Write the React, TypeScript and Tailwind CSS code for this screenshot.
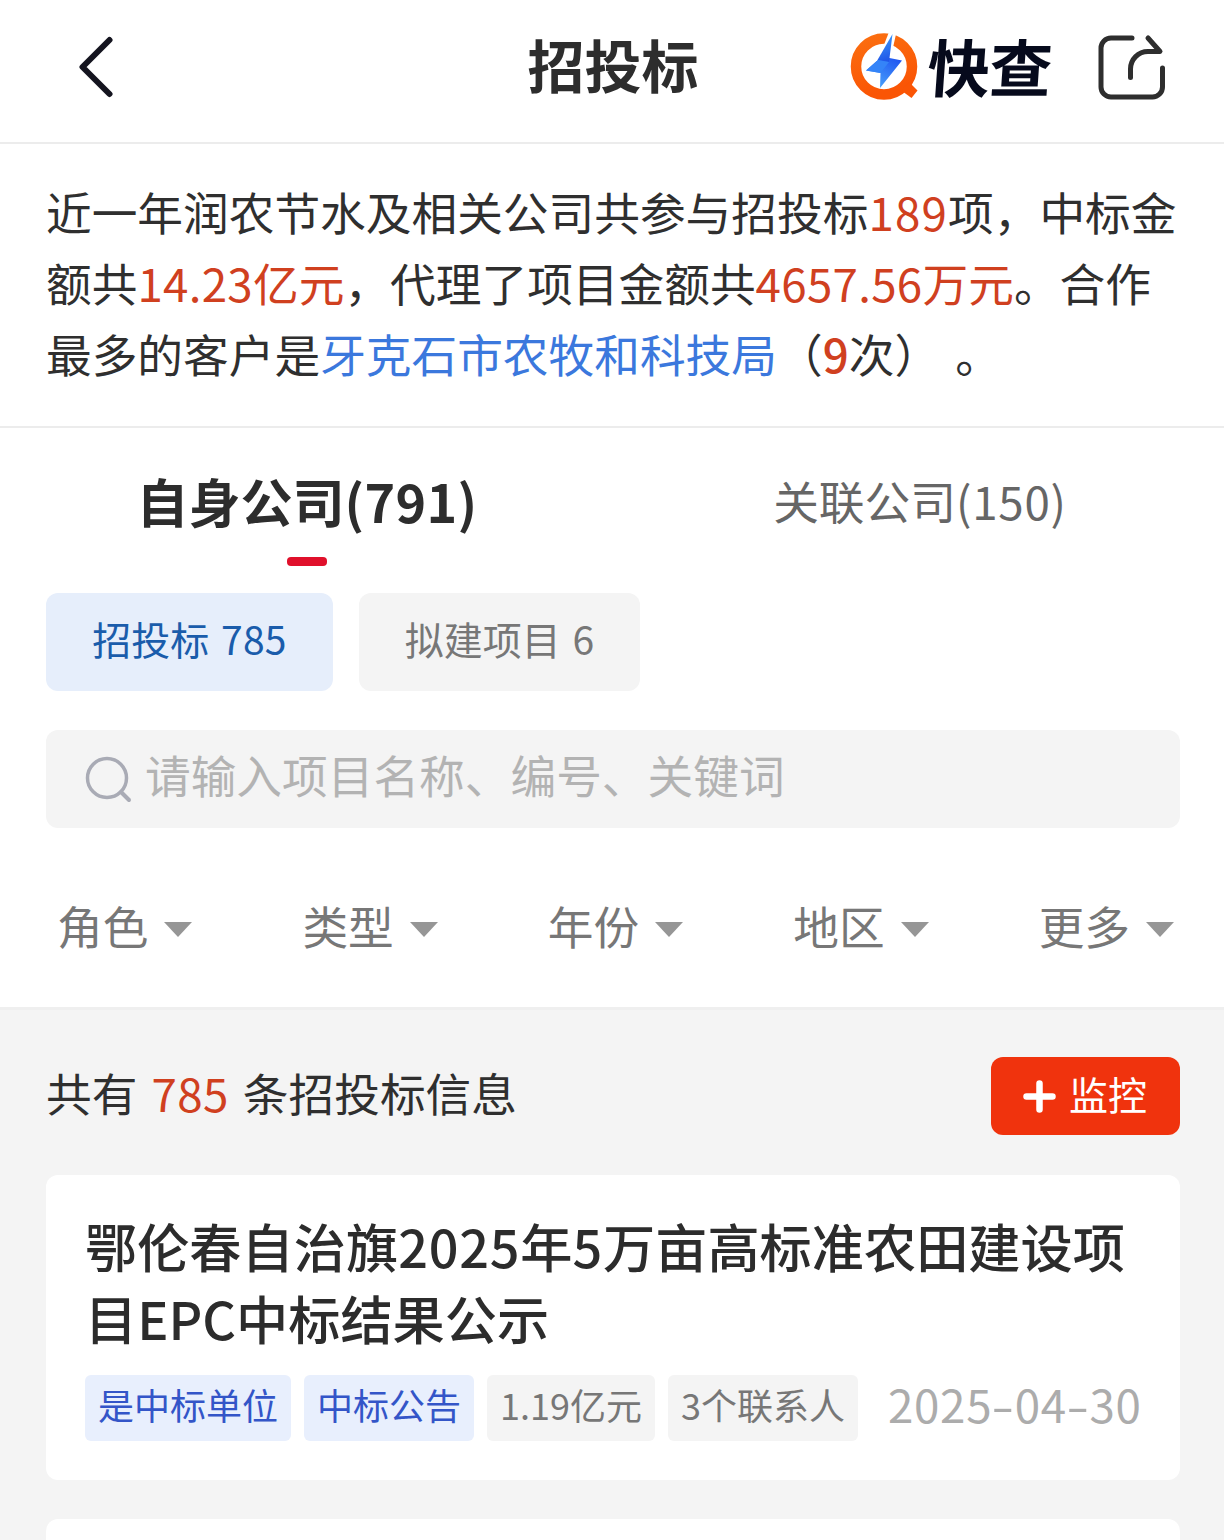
import React from "react";

const Num = ({ children }: { children: React.ReactNode }) => (
  <span className="tracking-[0.3px]">{children}</span>
);

const Red = ({ children }: { children: React.ReactNode }) => (
  <span className="text-[#d0401f]">{children}</span>
);

const Dash = () => <span className="mx-[3px] inline-block scale-x-[1.45]">-</span>;

function Logo() {
  return (
    <div className="flex items-center">
      <svg width="70" height="72" viewBox="0 0 70 72" fill="none">
        <defs>
          <linearGradient id="ring" x1="0" y1="0" x2="0.3" y2="1">
            <stop offset="0" stopColor="#fb6e10" />
            <stop offset="1" stopColor="#fa5505" />
          </linearGradient>
          <linearGradient id="boltTop" x1="0.3" y1="0" x2="0.5" y2="1">
            <stop offset="0" stopColor="#3f9bfa" />
            <stop offset="1" stopColor="#1f55e8" />
          </linearGradient>
          <linearGradient id="boltBottom" x1="1" y1="0" x2="0.3" y2="1">
            <stop offset="0" stopColor="#1d50f0" />
            <stop offset="1" stopColor="#4aa4fb" />
          </linearGradient>
        </defs>
        <circle cx="34" cy="35.5" r="28" stroke="url(#ring)" strokeWidth="10.5" />
        <path d="M54 56 L59.5 51.5 L67.5 59.5 L61.5 67 L52 60 Z" fill="#fa5505" />
        <path d="M39 1 L46.500 1 L42 21 L30 24 Z" fill="#fff" />
        <path d="M29 28 L16 39.500 L30.500 42 L30 57 L52 29.500 L39.500 27 Z" fill="url(#boltBottom)" />
        <path d="M42.500 3 L27.500 29 L39 31 Z" fill="url(#boltTop)" />
        <path d="M28 29 L16 39.500 L30.500 42 L39 31 Z" fill="#3584f8" />
      </svg>
      <div className="mb-1 ml-[8px] -skew-x-[4deg] text-[62.500px] leading-[72px] font-bold tracking-[-0.5px] text-[#060a1c]">
        快查
      </div>
    </div>
  );
}

function Header() {
  return (
    <header className="grid h-[144px] shrink-0 grid-cols-[1fr_auto_1fr] border-b-2 border-[#ececec] pb-[8px]">
      <div className="flex items-center pl-[78px]">
        <svg width="36" height="62" viewBox="0 0 36 62" fill="none">
          <path d="M31.5 4 L4.5 31 L31.5 58" stroke="#14141f" strokeWidth="6" strokeLinecap="round" strokeLinejoin="round" />
        </svg>
      </div>
      <h1 className="mb-[9px] self-center pl-[2px] text-[57px] leading-[80px] font-bold text-[#2d2d2d]">招投标</h1>
      <div className="flex items-center justify-end pr-[58px]">
        <Logo />
        <svg className="ml-[46px]" width="68" height="66" viewBox="0 0 68 66" fill="none" stroke="#2e2e2e" strokeWidth="5" strokeLinecap="round" strokeLinejoin="round">
          <path d="M34 4 H13 A10 10 0 0 0 3 14 V53 A10 10 0 0 0 13 63 H54.500 A10 10 0 0 0 64.500 53 V34" />
          <path d="M50 4 L62 17.500 H50 A17.500 17.500 0 0 0 32.500 35 V43.500" />
        </svg>
      </div>
    </header>
  );
}

function Summary() {
  return (
    <section className="h-[284px] shrink-0 border-b-2 border-[#ececec] pt-[32px] pl-[46px] text-[45.7px] leading-[71.2px] whitespace-nowrap text-[#2f2f2f]">
      <div>近一年润农节水及相关公司共参与招投标<Red><span className="tracking-[1.200px]">189</span></Red>项，中标金</div>
      <div>额共<Red><Num>14.23</Num>亿元</Red>，代理了项目金额共<Red><Num>4657.56</Num>万元</Red>。合作</div>
      <div className="[word-spacing:5px]">最多的客户是<span className="text-[#3b78dd]">牙克石市农牧和科技局</span>（<span className="font-medium text-[#d0401f]">9</span>次） 。</div>
    </section>
  );
}

function Tabs() {
  return (
    <nav className="grid h-[165px] shrink-0 grid-cols-2 pt-[36px]">
      <div className="flex flex-col items-center pl-0.5">
        <div className="text-[52px] leading-[74px] font-bold text-[#2d2d2d]">自身公司<span className="tracking-[0.3px]">(791)</span></div>
        <div className="mt-[19px] h-[9px] w-10 rounded-[4px] bg-[#e0102b]" />
      </div>
      <div className="flex justify-center pl-1 text-[45.7px] leading-[73px] text-[#666]">关联公司<span className="tracking-[0.8px]">(150)</span></div>
    </nav>
  );
}

function Filters() {
  return (
    <div className="mt-[60px] mr-[50px] ml-[57px] flex h-[80px] shrink-0 justify-between text-[45.7px] leading-[68px] text-[#777]">
      {["角色", "类型", "年份", "地区", "更多"].map((name) => (
        <div key={name} className="flex items-center gap-4">
          <span className="mb-1.5">{name}</span>
          <svg className="mt-0.5" width="28" height="15" viewBox="0 0 28 15">
            <path d="M0 0 H28 L14 15 Z" fill="#969696" />
          </svg>
        </div>
      ))}
    </div>
  );
}

function BidCard() {
  return (
    <article className="mt-10 h-[305px] shrink-0 rounded-xl bg-white pt-[35px] pl-[39px]">
      <h2 className="text-[52.2px] leading-[71.500px] font-medium whitespace-nowrap text-[#2c2c2c]">
        <div>鄂伦春自治旗<span className="tracking-[0.8px]">2025</span>年<span className="tracking-[0.8px]">5</span>万亩高标准农田建设项</div>
        <div>目EPC中标结果公示</div>
      </h2>
      <div className="mt-[22px] flex gap-[13px] text-[36px] leading-[59px] whitespace-nowrap">
        <span className="h-[66px] w-[206px] rounded-md bg-[#e8effd] text-center text-[#3355c8]">是中标单位</span>
        <span className="h-[66px] w-[170px] rounded-md bg-[#e8effd] text-center text-[#3355c8]">中标公告</span>
        <span className="h-[66px] w-[168px] rounded-md bg-[#f4f4f4] text-center text-[#777]">1.19亿元</span>
        <span className="h-[66px] w-[190px] rounded-md bg-[#f4f4f4] text-center text-[#777]">3个联系人</span>
        <span className="ml-[17px] text-[45.7px] leading-[57px] tracking-[0.7px] text-[#acacac]">
          2025<Dash />04<Dash />30
        </span>
      </div>
    </article>
  );
}

export default function App() {
  return (
    <div
      lang="zh-CN"
      className="flex h-[1540px] w-[1224px] flex-col overflow-hidden bg-white font-['Noto_Sans_CJK_SC',sans-serif]"
    >
      <Header />
      <Summary />
      <Tabs />
      <div className="flex shrink-0 gap-[26px] pl-[46px] text-[39px] leading-[91px] [word-spacing:3px]">
        <div className="h-[98px] w-[287px] rounded-xl bg-[#e6eefb] text-center text-[#1a5cab]">招投标 <Num>785</Num></div>
        <div className="h-[98px] w-[281px] rounded-xl bg-[#f4f4f4] text-center text-[#777]">拟建项目 6</div>
      </div>
      <div className="mt-[39px] mr-[44px] ml-[46px] flex h-[98px] shrink-0 items-center rounded-xl bg-[#f4f4f4] pl-[39px]">
        <svg width="47" height="47" viewBox="0 0 47 47" fill="none" stroke="#a9abb5" strokeWidth="3.500" strokeLinecap="round">
          <circle cx="22" cy="22" r="19.500" />
          <path d="M36 36 L44 44" strokeWidth="4" />
        </svg>
        <span className="mb-2.5 ml-[13px] text-[45.7px] leading-[70px] text-[#b3b3b3]">请输入项目名称、编号、关键词</span>
      </div>
      <Filters />
      <main className="mt-[39px] flex flex-1 flex-col border-t-[3px] border-[#efefef] bg-[#f4f4f4] pr-[44px] pl-[46px]">
        <div className="mt-[47px] flex h-[78px] shrink-0 items-center justify-between">
          <div className="mb-2 text-[45.7px] leading-[70px] text-[#2f2f2f] [word-spacing:4px]">
            共有 <span className="text-[#d0401f]"><Num>785</Num></span> 条招投标信息
          </div>
          <button className="flex h-[78px] w-[189px] items-center rounded-xl bg-[#f0330d] pl-8 text-white">
            <svg width="33" height="33" viewBox="0 0 33 33" fill="none" stroke="currentColor" strokeWidth="6.500" strokeLinecap="round">
              <path d="M16.500 3.500 V29.500 M3.500 16.500 H29.500" />
            </svg>
            <span className="mb-1.5 ml-[13px] text-[39px] leading-[60px]">监控</span>
          </button>
        </div>
        <BidCard />
        <div className="mt-[39px] h-[60px] shrink-0 rounded-t-xl bg-white" />
      </main>
    </div>
  );
}
